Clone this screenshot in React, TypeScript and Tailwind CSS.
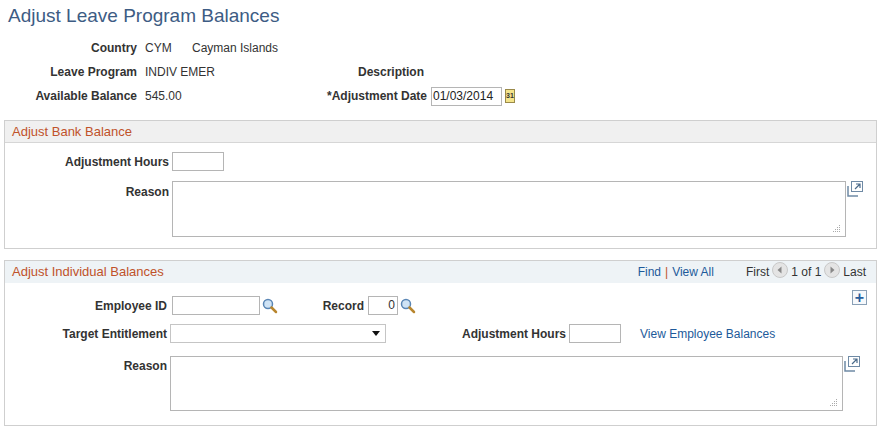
import React from "react";

const Mag = () => (
  <svg width="16" height="16" viewBox="0 0 16 16" className="ml-[2px]">
    <circle cx="6" cy="6" r="4.5" fill="#cfe3f5" stroke="#5a86b5" strokeWidth="1.5" />
    <line x1="9.5" y1="9.5" x2="14" y2="14" stroke="#b8862e" strokeWidth="2.5" strokeLinecap="round" />
  </svg>
);

const Expand = () => (
  <svg width="16" height="16" viewBox="0 0 16 16">
    <rect x="4.5" y="0.5" width="11" height="10" fill="#fff" stroke="#6f8aa5" />
    <path d="M1 5v10h10" fill="none" stroke="#6f8aa5" strokeWidth="1.5" />
    <path d="M8 8l5-5M9 3h4v4" fill="none" stroke="#4a6a8a" strokeWidth="1.2" />
  </svg>
);

const Grip = () => (
  <svg width="8" height="8" viewBox="0 0 8 8" className="absolute right-[4px] bottom-[3px]">
    <g fill="#aaa">
      <rect x="6" y="0" width="1" height="1" /><rect x="4" y="2" width="1" height="1" /><rect x="6" y="2" width="1" height="1" />
      <rect x="2" y="4" width="1" height="1" /><rect x="4" y="4" width="1" height="1" /><rect x="6" y="4" width="1" height="1" />
      <rect x="0" y="6" width="1" height="1" /><rect x="2" y="6" width="1" height="1" /><rect x="4" y="6" width="1" height="1" /><rect x="6" y="6" width="1" height="1" />
    </g>
  </svg>
);

const Arrow = ({ dir }: { dir: "l" | "r" }) => (
  <svg width="16" height="16" viewBox="0 0 16 16" className="mx-[3px] -mt-[4px]">
    <circle cx="8" cy="8" r="7.5" fill="#e4e4e4" stroke="#c8c8c8" />
    {dir === "l" ? <path d="M9.5 4.5v7L5.5 8z" fill="#888" /> : <path d="M6.5 4.5v7l4-3.5z" fill="#888" />}
  </svg>
);

export default function App() {
  return (
    <div className="w-[884px] h-[432px] bg-white text-[12px] text-[#333] font-[family-name:Liberation_Sans,Arial,sans-serif] whitespace-nowrap relative">
      <div className="pt-[5px] pl-[8px] text-[19px] text-[#3d5c84] leading-[22px]">Adjust Leave Program Balances</div>
      <div className="mt-[14px] flex flex-col gap-[10px]">
        <div className="flex items-center h-[14px]">
          <div className="w-[137px] text-right font-bold">Country</div>
          <div className="ml-[8px] w-[47px]">CYM</div>
          <div>Cayman Islands</div>
        </div>
        <div className="flex items-center h-[14px]">
          <div className="w-[137px] text-right font-bold">Leave Program</div>
          <div className="ml-[8px] w-[180px]">INDIV EMER</div>
          <div className="w-[99px] text-right font-bold">Description</div>
        </div>
        <div className="flex items-center h-[14px]">
          <div className="w-[137px] text-right font-bold">Available Balance</div>
          <div className="ml-[8px] w-[180px]">545.00</div>
          <div className="w-[102px] text-right font-bold">*Adjustment Date</div>
          <div className="ml-[4px] w-[71px] h-[19px] border border-[#b5b5b5] flex items-center pl-[1px] text-[#222]">01/03/2014</div>
          <div className="ml-[3px] w-[10px] h-[14px] bg-[#f4e48a] border border-[#9a8a4a] text-[7px] font-bold leading-[12px] text-center">31</div>
        </div>
      </div>

      <div className="mt-[17px] mx-[4px] w-[873px] h-[129px] border border-[#cfcfcf]">
        <div className="h-[22px] bg-[#f0f0f0] border-b border-[#d6d6d6] pl-[7px] flex items-center text-[13px] text-[#c0522a]">Adjust Bank Balance</div>
        <div className="flex items-center mt-[9px]">
          <div className="w-[164px] text-right font-bold">Adjustment Hours</div>
          <div className="ml-[3px] w-[52px] h-[19px] border border-[#b5b5b5]" />
        </div>
        <div className="flex mt-[10px]">
          <div className="w-[164px] text-right font-bold pt-[2px]">Reason</div>
          <div className="ml-[3px] w-[674px] h-[56px] border border-[#b5b5b5] relative"><Grip /></div>
          <div className="ml-[1px]"><Expand /></div>
        </div>
      </div>

      <div className="mt-[11px] mx-[4px] w-[873px] h-[166px] border border-[#cfcfcf]">
        <div className="h-[22px] bg-[#eef3f6] pl-[7px] pr-[10px] flex items-center text-[13px] text-[#c0522a]">
          <span className="flex-1">Adjust Individual Balances</span>
          <span className="text-[12px] text-[#1d5a9a]">Find</span>
          <span className="text-[12px] text-[#c0522a] mx-[4px]">|</span>
          <span className="text-[12px] text-[#1d5a9a]">View All</span>
          <span className="text-[12px] text-[#333] ml-[32px]">First</span>
          <Arrow dir="l" />
          <span className="text-[12px] text-[#333]">1 of 1</span>
          <Arrow dir="r" />
          <span className="text-[12px] text-[#333]">Last</span>
        </div>
        <div className="flex justify-end pr-[9px] mt-[7px]">
          <div className="w-[15px] h-[15px] border border-[#8aa0b6] bg-[#f6f9fc] flex items-center justify-center text-[#2a5f9e] text-[16px] font-bold leading-none">+</div>
        </div>
        <div className="flex items-center -mt-[9px]">
          <div className="w-[162px] text-right font-bold">Employee ID</div>
          <div className="ml-[5px] w-[88px] h-[19px] border border-[#b5b5b5]" />
          <Mag />
          <div className="w-[86px] text-right font-bold">Record</div>
          <div className="ml-[4px] w-[30px] h-[19px] border border-[#b5b5b5] text-right pr-[2px] leading-[17px]">0</div>
          <Mag />
        </div>
        <div className="flex items-center mt-[9px]">
          <div className="w-[162px] text-right font-bold">Target Entitlement</div>
          <div className="ml-[3px] w-[216px] h-[19px] border border-[#c5c5c5] flex items-center justify-end pr-[5px]">
            <svg width="8" height="5" viewBox="0 0 8 5"><path d="M0 0h8L4 5z" fill="#111" /></svg>
          </div>
          <div className="w-[180px] text-right font-bold">Adjustment Hours</div>
          <div className="ml-[3px] w-[52px] h-[19px] border border-[#b5b5b5]" />
          <div className="ml-[19px] text-[#1d5a9a]">View Employee Balances</div>
        </div>
        <div className="flex mt-[13px]">
          <div className="w-[162px] text-right font-bold pt-[1px]">Reason</div>
          <div className="ml-[3px] w-[673px] h-[55px] border border-[#b5b5b5] relative"><Grip /></div>
          <div className="ml-[1px]"><Expand /></div>
        </div>
      </div>
    </div>
  );
}
